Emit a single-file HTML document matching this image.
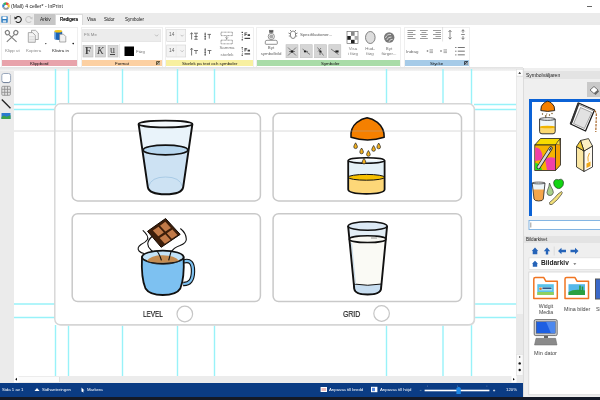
<!DOCTYPE html>
<html><head><meta charset="utf-8">
<style>
*{box-sizing:border-box;margin:0;padding:0}
html,body{width:600px;height:400px;overflow:hidden;background:#fff;font-family:"Liberation Sans",sans-serif;color:#222}
.a{position:absolute}
.t{position:absolute;white-space:nowrap;line-height:1;will-change:transform}
#title{left:0;top:0;width:600px;height:13px;background:#fff}
#tabs{left:0;top:13px;width:600px;height:12px;background:#ebebeb}
#ribbon{left:0;top:25px;width:600px;height:42.3px;background:#fff}
.grp{position:absolute;top:2px;height:40.5px;background:#fff;border:1px solid #efefef}
.band{position:absolute;left:0;right:0;bottom:1px;height:5.5px}
.gl{font-size:4.4px;color:#111;top:61.6px}
.rl{font-size:4.4px;color:#444}
#leftbar{left:0;top:68px;width:14px;height:315px;background:#ebebeb}
#canvas{left:14px;top:69px;width:503px;height:307px;background:#fff;overflow:hidden}
#vscroll{left:516px;top:68px;width:7px;height:315px;background:#e9e9e9}
#hscroll{left:14px;top:376px;width:502px;height:7px;background:#ececec}
#status{left:0;top:383px;width:523px;height:14px;background:#0b3c84}
#bottom{left:0;top:397px;width:600px;height:3px;background:#141a28}
#panel{left:523px;top:68px;width:77px;height:329px;background:#e9e9e9}
.st{font-size:4.3px;color:#fff;top:387.5px}
</style></head><body>
<!-- TITLE -->
<div id="title" class="a">
 <svg class="a" style="left:1.5px;top:2px" width="8" height="8" viewBox="0 0 8 8">
  <path d="M4 4L4 0.3A3.7 3.7 0 0 1 7.2 2.1Z" fill="#e94c3d"/>
  <path d="M4 4L7.2 2.1A3.7 3.7 0 0 1 7.2 5.9Z" fill="#f4c430"/>
  <path d="M4 4L0.8 2.1A3.7 3.7 0 0 1 4 0.3Z" fill="#3cae5c"/>
  <path d="M4 4L0.8 5.9A3.7 3.7 0 0 1 0.8 2.1Z" fill="#2f84d0"/>
  <path d="M0.8 5.9A3.7 3.7 0 0 0 7.2 5.9L4 4Z" fill="#9a9a9a"/>
  <circle cx="4" cy="4.3" r="1.6" fill="#fff"/>
 </svg>
 <div class="t" style="left:10.8px;top:4.3px;font-size:5.1px;color:#222">(Mall) 4 celler* - InPrint</div>
 <div class="a" style="left:586.5px;top:5.8px;width:5.5px;height:0.7px;background:#666"></div>
</div>
<!-- TABS -->
<div id="tabs" class="a">
 <svg class="a" style="left:1px;top:3px" width="7" height="7" viewBox="0 0 7 7">
  <rect x="0.3" y="0.3" width="6.4" height="6.4" rx="0.6" fill="#2d7cc0"/>
  <rect x="1.5" y="0.6" width="4" height="2.4" fill="#fff"/>
  <rect x="1.8" y="4.3" width="3.4" height="2.2" fill="#cfe3f3"/>
 </svg>
 <div class="a" style="left:10px;top:2px;width:0.8px;height:9px;background:#c8c8c8"></div>
 <svg class="a" style="left:14px;top:3px" width="8" height="7" viewBox="0 0 8 7">
  <path d="M1.6 2.2A3 3 0 1 1 1.8 5.2" fill="none" stroke="#222" stroke-width="1.1"/>
  <path d="M0.3 0.6L3.2 2.4L0.6 3.6Z" fill="#222"/>
 </svg>
 <svg class="a" style="left:25px;top:3px" width="8" height="7" viewBox="0 0 8 7">
  <path d="M6.4 2.2A3 3 0 1 0 6.2 5.2" fill="none" stroke="#c8c8c8" stroke-width="1.1"/>
  <path d="M7.7 0.6L4.8 2.4L7.4 3.6Z" fill="#c8c8c8"/>
 </svg>
 <div class="a" style="left:34px;top:0.5px;width:21px;height:11.5px;background:#c6c6c6"></div>
 <div class="t" style="left:39.6px;top:5.3px;font-size:4.85px;color:#222">Arkiv</div>
 <div class="a" style="left:55px;top:0.5px;width:27.5px;height:12px;background:#fff;border:1px solid #dadada;border-bottom:none"></div>
 <div class="t" style="left:59.6px;top:5.3px;font-size:4.45px;color:#000;-webkit-text-stroke:0.15px #000">Redigera</div>
 <div class="t" style="left:87px;top:5.3px;font-size:4.5px;color:#111">Visa</div>
 <div class="t" style="left:104.4px;top:5.3px;font-size:4.55px;color:#111">Sidor</div>
 <div class="t" style="left:125px;top:5.3px;font-size:4.5px;color:#111">Symboler</div>
</div>
<!-- RIBBON -->
<div id="ribbon" class="a">
 <div class="grp" style="left:1px;width:77px"><div class="band" style="background:#e8a3ab"></div></div>
 <div class="grp" style="left:80.5px;width:82px"><div class="band" style="background:#fcd0a2"></div></div>
 <div class="grp" style="left:164.5px;width:89.5px"><div class="band" style="background:#f8f0a0"></div></div>
 <div class="grp" style="left:256px;width:145px"><div class="band" style="background:#a9dca8"></div></div>
 <div class="grp" style="left:403.5px;width:66.5px"><div class="band" style="background:#a6cbe8"></div></div>
</div>
<div id="ribbonc" class="a" style="left:0;top:0;width:600px;height:68px">
 <svg class="a" style="left:0;top:25px" width="600" height="43" viewBox="0 25 600 43">
 <!-- scissors -->
 <g fill="none" stroke="#808080" stroke-width="1.15">
  <ellipse cx="7.4" cy="32.6" rx="2" ry="2.2" transform="rotate(-30 7.4 32.6)"/><ellipse cx="15.8" cy="32.6" rx="2" ry="2.2" transform="rotate(30 15.8 32.6)"/>
  <path d="M8.8 34.6L16.6 41.8M14.4 34.6L6.8 41.8"/>
 </g>
 <!-- copy -->
 <g fill="#f4f4f4" stroke="#8a8a8a" stroke-width="0.7">
  <path d="M31.5 30.3H35.5L38.3 33V39.5H31.5Z"/>
  <path d="M28.3 32.6H32.5L35.3 35.3V42.3H28.3Z"/>
 </g>
 <g stroke="#c0c0c0" stroke-width="0.4"><path d="M29.3 36.5H34.3M29.3 38H34.3M29.3 39.5H34.3M29.3 41H34.3"/></g>
 <!-- paste -->
 <path d="M54.5 31.5V39.2Q58.3 40.6 62.2 39.2V31.5Z" fill="#1d63b5"/>
 <path d="M55.5 32V39" stroke="#5aa0e8" stroke-width="1"/>
 <ellipse cx="58.3" cy="31.3" rx="3.9" ry="1.2" fill="#f0c419"/>
 <path d="M59.6 34.2H63.5L65.8 36.5V42H59.6Z" fill="#f2f2f2" stroke="#777" stroke-width="0.6"/>
 <circle cx="45.8" cy="43.6" r="0.7" fill="#333"/>
 <circle cx="73.2" cy="43.6" r="0.8" fill="#111"/>
 <!-- Format -->
 <rect x="82.5" y="29.7" width="78.3" height="12" fill="#ececec" stroke="#e0e0e0" stroke-width="0.6"/>
 <path d="M155 34.6L156.6 36.2L158.2 34.6" fill="none" stroke="#999" stroke-width="0.6"/>
 <g fill="#d6d6d6" stroke="#bdbdbd" stroke-width="0.6">
  <rect x="83" y="45.5" width="10" height="11.5"/>
  <rect x="95.5" y="45.5" width="10" height="11.5"/>
  <rect x="108" y="45.5" width="10" height="11.5"/>
 </g>
 <path d="M119.6 44V58" stroke="#d8d8d8" stroke-width="0.6"/>
 <rect x="124.5" y="46.5" width="9.5" height="9.5" fill="#000"/>
 <g fill="#555"><rect x="156" y="61" width="4" height="4" fill="#6b5a3a"/></g>
 <path d="M156.6 61.6L159.4 64.4M157 64.4H159.4V62" fill="none" stroke="#fff" stroke-width="0.5"/>
 <!-- Storlek -->
 <g fill="#f3f3f3" stroke="#d4d4d4" stroke-width="0.6">
  <rect x="166.7" y="29.5" width="19" height="12"/>
  <rect x="166.7" y="45" width="19" height="12"/>
 </g>
 <path d="M176.2 29.5V41.5M176.2 45V57" stroke="#e2e2e2" stroke-width="0.5"/>
 <path d="M180.6 34.8L182.1 36.3L183.6 34.8M180.6 50.3L182.1 51.8L183.6 50.3" fill="none" stroke="#999" stroke-width="0.55"/>
 <g stroke="#555" stroke-width="0.8" fill="none">
  <path d="M191.6 33V39.5M190.4 34.2L191.6 32.6L192.8 34.2"/>
  <path d="M194 33.2H198M196 33.2V39.3M194.3 39.3H197.7M194.3 36.5H197.7"/>
  <path d="M205.2 32.6V39.6"/>
  <path d="M207.5 34.4H211M209.3 34.4V38.6"/>
  <path d="M191.6 48.5V55.5M190.4 49.7L191.6 48.1L192.8 49.7"/>
  <path d="M194 50.5H198M196 50.5V54"/>
  <path d="M205.2 48.2V55.5"/>
  <path d="M207.6 50.5H211.4M209.5 50.5V54"/>
 </g>
 <g fill="#555"><rect x="204.5" y="33.6" width="1.4" height="1"/><rect x="204.5" y="36" width="1.4" height="1"/><rect x="204.5" y="38.5" width="1.4" height="1"/>
  <rect x="204.5" y="49.4" width="1.4" height="1"/><rect x="204.5" y="51.8" width="1.4" height="1"/><rect x="204.5" y="54.3" width="1.4" height="1"/></g>
 <g fill="none" stroke="#666" stroke-width="0.7" stroke-dasharray="0.9 0.5">
  <rect x="221" y="32.2" width="11.4" height="3.4"/>
  <rect x="221" y="40.2" width="11.4" height="3.6"/>
 </g>
 <g fill="none" stroke="#777" stroke-width="0.6">
  <path d="M226.7 35.8V40M225.3 37.3L226.7 38.8L228.1 37.3"/>
 </g>
 <g fill="#333">
  <rect x="241.6" y="31.8" width="1.3" height="1.2"/><rect x="241.9" y="34" width="0.8" height="0.8"/><rect x="241.9" y="35.7" width="0.8" height="0.8"/><rect x="241.9" y="37.4" width="0.8" height="0.8"/><rect x="241.6" y="39.2" width="1.3" height="1.2"/>
  <rect x="241.6" y="47.2" width="1.3" height="1.2"/><rect x="241.9" y="49.4" width="0.8" height="0.8"/><rect x="241.9" y="51.1" width="0.8" height="0.8"/><rect x="241.9" y="52.8" width="0.8" height="0.8"/><rect x="241.6" y="54.6" width="1.3" height="1.2"/>
 </g>
 <g fill="#444">
  <path d="M244.5 36V32.4H247.2V33.3H245.4V33.9H246.9V34.8H245.4V36Z"/><path d="M247.6 34.2H250V36H247.6Z"/>
  <rect x="244.5" y="37.8" width="5.6" height="1.2"/>
  <path d="M244.5 51.5V47.9H247.2V48.8H245.4V49.4H246.9V50.3H245.4V51.5Z"/><path d="M247.6 49.7H250V51.5H247.6Z"/>
  <rect x="244.5" y="53.3" width="5.6" height="1.2"/>
 </g>
 <!-- Symboler -->
 <g fill="none" stroke="#666" stroke-width="0.7">
  <rect x="269.5" y="30.3" width="3.5" height="2" fill="#555"/>
  <circle cx="271.3" cy="36.5" r="3.1"/>
  <path d="M271.3 32.3V33.4M265.3 41.8Q265.3 40.3 267 40.3H275.7Q277.3 40.3 277.3 41.8V43.6Q277.3 44.3 276.6 44.3H266Q265.3 44.3 265.3 43.6Z"/>
 </g>
 <circle cx="271.3" cy="36.5" r="2" fill="#aaa"/>
 <g fill="none" stroke="#555" stroke-width="0.7">
  <path d="M290.5 33.5Q290.5 31 293 31Q295.5 31 295.5 33.5V35.5Q295.5 38.5 293 38.5Q290.5 38.5 290.5 35.5Z"/>
  <path d="M288.5 33L290.5 34M297.5 33L295.5 34M291 31L290 30M295 31L296 30M288.8 36H290.5M297.2 36H295.5"/>
 </g>
 <g fill="#d5d5d5" stroke="#c0c0c0" stroke-width="0.6">
  <rect x="286" y="44.7" width="12" height="13"/>
  <rect x="300.2" y="44.7" width="12" height="13"/>
  <rect x="314.5" y="44.7" width="12" height="13"/>
  <rect x="328.8" y="44.7" width="12" height="13"/>
 </g>
 <g fill="none" stroke="#555" stroke-width="0.7">
  <path d="M288 47.5L296 55.5M296 47.5L288 55.5M289 51.5H295"/>
  <path d="M302.5 49L310 54.5M304.5 51L308 51.5"/>
  <path d="M317.5 47.5L323.5 55.5M318 51.5L321 48M320 55V50.5"/>
  <path d="M331 49L338.5 54.5M334 51.5L338.5 51"/>
 </g>
 <g fill="#222">
  <circle cx="292" cy="51.5" r="1.2"/><circle cx="305" cy="51.5" r="1.1"/><circle cx="320.5" cy="51.5" r="1.1"/><rect x="335.5" y="50.5" width="3" height="2"/>
 </g>
 <g stroke="#555" stroke-width="0.6"><rect x="347" y="31.6" width="11" height="11.8" fill="#fff"/></g>
 <g fill="#222"><rect x="347.3" y="36" width="3.5" height="3.8"/><rect x="351" y="39.8" width="3.6" height="3.5"/><rect x="351" y="32" width="3.6" height="3.8" fill="#888"/><rect x="354.6" y="36" width="3.4" height="3.8" fill="#aaa"/></g>
 <ellipse cx="370.3" cy="37.5" rx="4.8" ry="6" fill="#ddd" stroke="#666" stroke-width="0.8"/>
 <circle cx="389.2" cy="37.5" r="5.2" fill="#777"/>
 <g fill="none" stroke="#fff" stroke-width="0.7"><path d="M385.5 38Q387 33.8 391 34.5M386.8 40Q388.3 36.5 391.5 37M389 41.8Q390 39 392.7 39.3"/></g>
 <!-- Stycke -->
 <g stroke="#7a7a7a" stroke-width="0.75">
  <path d="M407.5 30.5H415.5M407.5 32.5H413M407.5 34.5H415.5M407.5 36.5H413M407.5 38.5H415.5"/>
  <path d="M420 30.5H427.8M421.5 32.5H426.3M420 34.5H427.8M421.5 36.5H426.3M420 38.5H427.8"/>
  <path d="M433 30.5H441M435.5 32.5H441M433 34.5H441M435.5 36.5H441M433 38.5H441"/>
 </g>
 <path d="M442.6 27V41.5" stroke="#cfcfcf" stroke-width="0.6"/>
 <g fill="none" stroke="#555" stroke-width="0.7">
  <path d="M450 30.5V39M448.5 32L450 30.3L451.5 32M448.5 37.5L450 39.2L451.5 37.5"/>
  <path d="M463 29.8V33M461.5 31.3L463 29.7L464.5 31.3M463 36V39.3M461.5 37.8L463 39.4L464.5 37.8M461.2 34.5H464.8"/>
 </g>
 <g stroke="#777" stroke-width="0.6">
  <path d="M426.5 51H428.5M427.5 50V52M429.5 49.8H433M429.5 51.2H433M429.5 52.6H433"/>
  <path d="M440 51H442M441 50V52M443.5 49.8H447M443.5 51.2H447M443.5 52.6H447"/>
 </g>
 <g fill="#666"><rect x="455.2" y="47" width="1.2" height="1"/><rect x="455.2" y="50.7" width="1.2" height="1"/><rect x="455.2" y="54.4" width="1.2" height="1"/>
  <rect x="457.8" y="47" width="7" height="0.9"/><rect x="457.8" y="50.7" width="7" height="0.9"/><rect x="457.8" y="54.4" width="7" height="0.9"/></g>
 <rect x="464" y="61" width="4" height="4" fill="#3a4a5a"/>
 <path d="M464.6 61.6L467.4 64.4M465 64.4H467.4V62" fill="none" stroke="#fff" stroke-width="0.5"/>
</svg>
<div class="t" style="left:4.80px;top:48.58px;font-size:4.4px;color:#888;">Klipp ut</div>
<div class="t" style="left:26.00px;top:48.58px;font-size:4.4px;color:#888;">Kopiera</div>
<div class="t" style="left:51.60px;top:48.98px;font-size:4.4px;color:#222;">Klistra in</div>
<div class="t" style="left:84.30px;top:33.28px;font-size:4.4px;color:#888;">FS Me</div>
<div class="t" style="left:84.6px;top:45.6px;font-size:10px;font-family:'Liberation Serif';font-weight:bold;color:#444">F</div>
<div class="t" style="left:96.8px;top:45.6px;font-size:10px;font-family:'Liberation Serif';font-style:italic;color:#444">K</div>
<div class="t" style="left:110px;top:45.3px;font-size:10px;font-family:'Liberation Serif';color:#444;text-decoration:underline">u</div>
<div class="t" style="left:136.20px;top:49.58px;font-size:4.4px;color:#777;">Färg</div>
<div class="t" style="left:168.60px;top:33.16px;font-size:4.8px;color:#666;">14</div>
<div class="t" style="left:168.60px;top:48.66px;font-size:4.8px;color:#666;">14</div>
<div class="t" style="left:211.60px;width:30px;text-align:center;top:46.38px;font-size:4.4px;color:#777;">Samma</div>
<div class="t" style="left:211.60px;width:30px;text-align:center;top:52.78px;font-size:4.4px;color:#777;">storlek</div>
<div class="t" style="left:256.30px;width:30px;text-align:center;top:46.18px;font-size:4.4px;color:#666;">Byt</div>
<div class="t" style="left:256.30px;width:30px;text-align:center;top:52.18px;font-size:4.4px;color:#666;">symbolbild</div>
<div class="t" style="left:299.80px;top:32.78px;font-size:4.4px;color:#555;">Specifikationer...</div>
<div class="t" style="left:337.60px;width:30px;text-align:center;top:46.78px;font-size:4.4px;color:#777;">Visa</div>
<div class="t" style="left:337.60px;width:30px;text-align:center;top:52.38px;font-size:4.4px;color:#777;">i färg</div>
<div class="t" style="left:355.30px;width:30px;text-align:center;top:46.78px;font-size:4.4px;color:#777;">Hud-</div>
<div class="t" style="left:355.30px;width:30px;text-align:center;top:52.38px;font-size:4.4px;color:#777;">färg</div>
<div class="t" style="left:374.30px;width:30px;text-align:center;top:46.78px;font-size:4.4px;color:#777;">Byt</div>
<div class="t" style="left:374.30px;width:30px;text-align:center;top:52.38px;font-size:4.4px;color:#777;">färger...</div>
<div class="t" style="left:406.30px;top:49.58px;font-size:4.4px;color:#666;">Indrag</div>
<div class="t gl" style="left:30px">Klippbord</div>
 <div class="t gl" style="left:114.5px">Format</div>
 <div class="t gl" style="left:181.6px">Storlek på text och symboler</div>
 <div class="t gl" style="left:321px">Symboler</div>
 <div class="t gl" style="left:430px">Stycke</div>
</div>
<!-- LEFT TOOLBAR -->
<div id="leftbar" class="a">
 <svg class="a" style="left:0;top:0" width="14" height="60" viewBox="0 0 14 60">
  <rect x="1.8" y="5.5" width="8.8" height="9" rx="2" fill="#fff" stroke="#9aa8bc" stroke-width="1"/><path d="M2.5 13.8Q3 14.6 4 14.6H8.5Q9.6 14.6 10 13.6" fill="none" stroke="#6a7890" stroke-width="0.8"/>
  <rect x="1.8" y="18.3" width="8.6" height="9" rx="1" fill="#e2e2e2" stroke="#8a8a8a" stroke-width="0.8"/>
  <g stroke="#8a8a8a" stroke-width="0.8"><path d="M4.7 18.3V27.3M7.5 18.3V27.3M1.8 21.3H10.4M1.8 24.3H10.4"/></g>
  <path d="M1.8 31.5L10.5 40.3" stroke="#222" stroke-width="1.3"/>
  <rect x="1.5" y="45" width="9" height="6" fill="#2a7bd0"/>
  <path d="M1.5 49L4 47.5L6.5 48.8L10.5 47.2V51H1.5Z" fill="#3ba24a"/>
 </svg>
</div>
<div id="canvas" class="a"></div>
<div class="a" style="left:0;top:67.3px;width:523px;height:3.4px;background:linear-gradient(#e2e2e2,#f4f4f4)"></div>
<svg class="a" style="left:0;top:0" width="600" height="400" viewBox="0 0 600 400">
 <g stroke="#98f2f9" stroke-width="1.4" fill="none">
  <path d="M55.5 69V104M68.5 69V104M122.5 69V104M177.5 69V104M214.5 69V104M386.5 69V104M443 69V104M471.5 69V104"/>
  <path d="M55.5 325V376M68.5 325V376M122.5 325V376M177.5 325V376M214.5 325V376M386.5 325V376M443 325V376M471.5 325V376"/>
  <path d="M14 104.5H56M14 109.5H55M14 304H55M14 317.5H55M474 104.5H516M474 109.5H516M474 304H516M474 317.5H516"/>
 </g>
 <rect x="55.2" y="104.2" width="420" height="221.5" rx="5.5" fill="#e4e4e4"/>
 <rect x="54.8" y="103.8" width="419.5" height="221" rx="5.5" fill="#fff" stroke="#d6d6d6" stroke-width="1.4"/>
 <g fill="#fff" stroke="#c9c9c9" stroke-width="1.5">
  <rect x="72.2" y="113.3" width="188.2" height="87.6" rx="5.5"/>
  <rect x="273.1" y="113.3" width="188.4" height="87.6" rx="5.5"/>
  <rect x="72.2" y="213.7" width="188.2" height="87.9" rx="5.5"/>
  <rect x="273.1" y="213.7" width="188.4" height="87.9" rx="5.5"/>
 </g>
 <g fill="none" stroke="#c6c6c6" stroke-width="1.2">
  <circle cx="184.8" cy="314" r="7.8"/>
  <circle cx="381.6" cy="313.5" r="7.8"/>
 </g>
</svg>

<svg class="a" style="left:0;top:0" width="600" height="400" viewBox="0 0 600 400">
 <path d="M14 131H516" stroke="#dadada" stroke-width="1"/>
 <!-- water glass -->
 <path d="M138.6 124L147.8 187Q149 194.3 165.5 194.3Q182 194.3 183.2 187L192.4 124Z" fill="#e9f3fa"/>
 <path d="M142.5 150L147.8 187Q149 194.3 165.5 194.3Q182 194.3 183.2 187L188.5 150.5Z" fill="#cde2f3"/>
 <path d="M148.6 186.5Q151 177 165.5 177Q180 177 182.4 186.5" fill="none" stroke="#a9cbe6" stroke-width="1"/>
 <ellipse cx="165.5" cy="150" rx="22.3" ry="4.9" fill="#b8d7ef" stroke="#111" stroke-width="1.7"/>
 <path d="M138.6 124L147.8 187Q149 194.3 165.5 194.3Q182 194.3 183.2 187L192.4 124" fill="none" stroke="#111" stroke-width="1.9" stroke-linejoin="round"/>
 <ellipse cx="165.5" cy="124" rx="26.9" ry="3.4" fill="#f4f9fd" stroke="#111" stroke-width="1.8"/>

 <!-- orange juice -->
 <path d="M351 137.2Q350.2 128 357 122.3Q362 118.6 367.1 117.8Q372.2 118.6 377.4 122.3Q384.4 128 384.2 137.2Q367.6 142.6 351 137.2Z" fill="#f58000" stroke="#111" stroke-width="1.5" stroke-linejoin="round"/>
 <g fill="#f2b01e" stroke="#222" stroke-width="0.7">
  <path d="M355.6 142.8Q357.4 145.6 357.4 146.8A1.8 1.8 0 0 1 353.8 146.8Q353.8 145.6 355.6 142.8Z"/>
  <path d="M361.6 148Q363.4 150.8 363.4 152A1.8 1.8 0 0 1 359.8 152Q359.8 150.8 361.6 148Z"/>
  <path d="M368.4 150.5Q370.2 153.3 370.2 154.5A1.8 1.8 0 0 1 366.6 154.5Q366.6 153.3 368.4 150.5Z"/>
  <path d="M373.6 145.5Q375.4 148.3 375.4 149.5A1.8 1.8 0 0 1 371.8 149.5Q371.8 148.3 373.6 145.5Z"/>
  <path d="M378.7 143Q380.5 145.8 380.5 147A1.8 1.8 0 0 1 376.9 147Q376.9 145.8 378.7 143Z"/>
 </g>
 <path d="M348.2 160.5V189.5Q348.6 193.8 366.4 193.8Q384.2 193.8 384.6 189.5V160.5Z" fill="#e4f1f7"/>
 <path d="M348.2 177.3V189.5Q348.6 193.8 366.4 193.8Q384.2 193.8 384.6 189.5V177.3Z" fill="#fdd778"/>
 <ellipse cx="366.4" cy="177.3" rx="18.2" ry="2.9" fill="#f6c000" stroke="#111" stroke-width="1"/>
 <path d="M348.2 160.5V189.5Q348.6 193.8 366.4 193.8Q384.2 193.8 384.6 189.5V160.5" fill="none" stroke="#111" stroke-width="1.8"/>
 <ellipse cx="366.4" cy="160.5" rx="18.2" ry="2.7" fill="none" stroke="#111" stroke-width="1.5"/>
 <path d="M364 158.2Q365.8 161 365.8 162.2A1.8 1.8 0 0 1 362.2 162.2Q362.2 161 364 158.2Z" fill="#f2b01e" stroke="#222" stroke-width="0.7"/>

 <!-- hot chocolate -->
 <g fill="none" stroke="#111" stroke-width="1.1" stroke-linecap="round">
  <path d="M143.1 230.6Q149 236 147.5 239.5Q146 242 141 244.5Q136.5 247.5 139 251Q141 253 144 253.5"/>
  <path d="M152.5 236Q148 240 147.8 243.5Q147.5 247 151 250Q156 254 161.3 260"/>
  <path d="M180.6 228.8Q186 233 186.3 239Q186.5 243 180 245.5Q173 248 171.5 252Q170 256 168.8 260"/>
 </g>
 <path d="M165.6 218.5L180.2 234.4L161.2 247.3L147.5 231.3Z" fill="#3d1e0a" stroke="#140a03" stroke-width="1" stroke-linejoin="round"/>
 <g fill="#c27a48">
  <path d="M165.3 221.8L170.9 227.9L165.4 231.6L160 225.7Z"/>
  <path d="M172.4 229.6L177.4 235L171.8 238.8L166.8 233.3Z"/>
  <path d="M158.5 226.7L163.8 232.6L158.3 236.3L152.9 230.5Z"/>
  <path d="M165.4 234.3L170.5 239.9L164.8 243.7L159.7 238Z"/>
 </g>
 <path d="M183.6 261.5Q193.2 258.6 193 271.5Q192.8 284.5 183.2 284" fill="none" stroke="#111" stroke-width="4.4"/>
 <path d="M183.6 261.5Q193.2 258.6 193 271.5Q192.8 284.5 183.2 284" fill="none" stroke="#7cc0f0" stroke-width="2.2"/>
 <path d="M142 257Q141 278 145.5 288.5Q149.5 295 162.8 295Q176.5 295 180.3 288.5Q184.6 278 183.6 257Z" fill="#7dc1f1" stroke="#111" stroke-width="1.8" stroke-linejoin="round"/>
 <ellipse cx="162.8" cy="257" rx="20.8" ry="6.3" fill="#c3e3f8" stroke="#111" stroke-width="1.7"/>
 <path d="M146.5 261Q151 255.2 162.8 255.3Q175 255.4 179.2 261Q172 262.8 162.8 262.8Q152 262.8 146.5 261Z" fill="#c48c52"/>
 <path d="M144 259.5Q150 264.3 162.8 264.3Q175.5 264.3 181.6 259.5" fill="none" stroke="#222" stroke-width="0.8"/>
 <g fill="none" stroke="#111" stroke-width="1.1" stroke-linecap="round">
  <path d="M156.9 251Q159.5 254 161.3 260"/>
  <path d="M171.3 251Q170 255 168.8 260"/>
 </g>
 <!-- milk glass -->
 <path d="M348.1 226L354.3 289Q355 294.5 367.6 294.5Q380.3 294.5 381 289L387.1 226Z" fill="#fafaf5"/>
 <path d="M348.1 226L349.4 239H385.8L387.1 226Z" fill="#e3eef6"/>
 <path d="M353.5 284L354.3 289Q355 294.5 367.6 294.5Q380.3 294.5 381 289L381.6 284Q368 286.5 353.5 284Z" fill="#c8def1" stroke="#111" stroke-width="1"/>
 <path d="M351.5 243L355.5 284" stroke="#c8dbe9" stroke-width="1.1"/>
 <ellipse cx="367.6" cy="239.2" rx="18.3" ry="3.4" fill="#f8f8f3" stroke="#111" stroke-width="1.5"/>
 <path d="M371 238H377" stroke="#888" stroke-width="0.9"/>
 <path d="M348.1 226L354.3 289Q355 294.5 367.6 294.5Q380.3 294.5 381 289L387.1 226" fill="none" stroke="#111" stroke-width="1.9" stroke-linejoin="round"/>
 <ellipse cx="367.6" cy="226" rx="19.5" ry="4.3" fill="#dce9f5" stroke="#111" stroke-width="1.6"/>
</svg>
<svg class="a" style="left:0;top:0" width="600" height="400"><path d="M351 131H384.5" stroke="#aaa" stroke-opacity="0.45" stroke-width="1"/></svg>
<div class="t" style="left:142.6px;top:309.5px;font-size:8.6px;color:#1a1a1a;-webkit-text-stroke:0.2px #1a1a1a;transform:scaleX(0.74);transform-origin:0 0">LEVEL</div>
<div class="t" style="left:343px;top:309.5px;font-size:8.6px;color:#1a1a1a;-webkit-text-stroke:0.2px #1a1a1a;transform:scaleX(0.8);transform-origin:0 0">GRID</div>
<div id="vscroll" class="a"></div>
<div class="a" style="left:517px;top:77px;width:5.5px;height:237px;background:#f4f4f4"></div>
<svg class="a" style="left:516px;top:69px" width="8" height="8"><rect x="0.5" y="0.5" width="6.5" height="6.5" fill="#fff" stroke="#ddd" stroke-width="0.5"/><path d="M2.3 4.8L3.7 3L5.1 4.8Z" fill="#111"/></svg>
<svg class="a" style="left:516px;top:354px" width="8" height="22">
 <rect x="0.5" y="0.5" width="6.5" height="21" fill="#fafafa" stroke="#ddd" stroke-width="0.5"/>
 <circle cx="3.7" cy="3" r="0.7" fill="#222"/><circle cx="3.7" cy="9.4" r="1.2" fill="#111"/><circle cx="3.7" cy="16" r="1.2" fill="#111"/>
</svg>
<div id="hscroll" class="a"></div>
<div class="a" style="left:18px;top:376.6px;width:42px;height:5.8px;background:#fbfbfb;border-right:1px solid #dedede"></div>
<svg class="a" style="left:14px;top:376px" width="5" height="7"><rect x="0" y="0" width="4.5" height="6.5" fill="#fff"/><path d="M3 1.8L1.2 3.3L3 4.8Z" fill="#111"/></svg>
<svg class="a" style="left:511px;top:376px" width="6" height="7"><rect x="0.5" y="0" width="5" height="6.5" fill="#fff"/><path d="M2 2L3.8 3.3L2 4.6Z" fill="#111"/></svg>
<!-- STATUS -->
<div id="status" class="a"></div>
<div class="t st" style="left:1.5px">Sida 1 av 1</div>
<svg class="a" style="left:34px;top:387px" width="6" height="5"><path d="M0.5 4L3 1L5.5 4Z" fill="#fff"/></svg>
<div class="t st" style="left:42px">Sidhanteringen</div>
<svg class="a" style="left:81px;top:386.5px" width="4" height="6"><path d="M0.5 0.5L3.5 3.5L2 3.6L2.8 5.5L0.5 4.5Z" fill="#fff"/></svg>
<div class="t st" style="left:87px">Markera</div>

<svg class="a" style="left:0;top:0" width="600" height="400" viewBox="0 0 600 400">
 <rect x="320.6" y="387" width="6.4" height="5" fill="#fff"/>
 <rect x="321.5" y="388" width="4.6" height="3" fill="#c23a3a" opacity="0.35"/>
 <rect x="371" y="386.8" width="6.4" height="5.4" fill="#fff"/>
 <rect x="372" y="387.8" width="3" height="3.4" fill="#5a8ae0"/>
 <path d="M419.8 390.4H421.5" stroke="#9bb" stroke-width="0.5"/>
 <rect x="424.6" y="389.7" width="64.8" height="1.6" fill="#fff"/>
 <g fill="#aac"><rect x="427.2" y="385.7" width="0.6" height="0.8"/><rect x="457.3" y="385.7" width="0.6" height="0.8"/><rect x="486.6" y="385.7" width="0.6" height="0.8"/></g>
 <path d="M456.4 388L458.6 386.8L460.8 388V394H456.4Z" fill="#1e88e5"/>
 <path d="M493 390.5H495.2M494.1 389.4V391.6" stroke="#fff" stroke-width="0.6"/>
</svg>
<div class="t st" style="left:329px">Anpassa till bredd</div>
<div class="t st" style="left:380px">Anpassa till höjd</div>
<div class="t st" style="left:506px">120%</div>
<div id="bottom" class="a"></div>

<div class="a" style="left:523px;top:68px;width:77px;height:329px;background:#efefef;border-left:1px solid #dcdcdc"></div>
<div class="a" style="left:524px;top:70.7px;width:76px;height:8.6px;background:#e3e3e3"></div>
<div class="t" style="left:525.5px;top:72.9px;font-size:5px;color:#222">Symbolväljaren</div>
<div class="a" style="left:587.2px;top:81.8px;width:13px;height:15.4px;background:#c9c9c9"></div>
<svg class="a" style="left:587px;top:82px" width="13" height="15" viewBox="0 0 13 15">
 <path d="M3 8L7 4.5L11 8L7 11.5Z" fill="#fff" stroke="#555" stroke-width="0.8"/>
 <path d="M7 11.5L11 8L12 9.5L8.5 13Z" fill="#666"/>
</svg>
<div class="a" style="left:528.6px;top:99.2px;width:72px;height:117px;background:#fff;border:3.2px solid #0b62d6;border-right:none;border-bottom:none"></div>
<svg class="a" style="left:0;top:0" width="600" height="400" viewBox="0 0 600 400">
 <!-- sym1 juice -->
 <path d="M540.8 110.6Q540.5 105.5 543.8 103.2Q546 101.6 547.7 101.2Q549.5 101.6 551.6 103.2Q555 105.5 554.7 110.6Q547.7 112.2 540.8 110.6Z" fill="#f58000" stroke="#1a1a1a" stroke-width="0.9"/>
 <g fill="#6a4a10"><circle cx="542.5" cy="114" r="0.7"/><circle cx="545.5" cy="116" r="0.7"/><circle cx="549.5" cy="115" r="0.7"/><circle cx="552" cy="113.5" r="0.7"/></g>
 <path d="M547 113L545.5 118" stroke="#6a5020" stroke-width="0.5"/>
 <path d="M539.6 119V131.5Q539.6 133.8 542 133.8H553Q555.2 133.8 555.2 131.5V119Z" fill="#eef5f8"/>
 <path d="M539.6 127V131.5Q539.6 133.8 542 133.8H553Q555.2 133.8 555.2 131.5V127Z" fill="#fbd870"/>
 <ellipse cx="547.4" cy="127" rx="7.8" ry="1.3" fill="#f0b400"/>
 <path d="M539.6 119V131.5Q539.6 133.8 542 133.8H553Q555.2 133.8 555.2 131.5V119" fill="none" stroke="#222" stroke-width="0.9"/>
 <ellipse cx="547.4" cy="119" rx="7.8" ry="1.3" fill="none" stroke="#222" stroke-width="0.8"/>
 <!-- sym2 carton tilted -->
 <path d="M578.6 103L594.5 110L585.5 131L570.6 124Z" fill="#fff" stroke="#1a1a1a" stroke-width="1.3" stroke-linejoin="round"/>
 <path d="M578.6 103L571.8 121.5L570.6 124" fill="none" stroke="#333" stroke-width="2.2"/>
 <path d="M580.5 107.5L591.8 112.5L584.4 128.5L573.6 123.6Z" fill="#e2e2e2" stroke="#555" stroke-width="0.5"/>
 <path d="M578.8 104.5L593 110.7" stroke="#666" stroke-width="0.7"/>
 <path d="M594.5 110.5Q596.5 112 596.3 116L595.8 132" fill="none" stroke="#a05a18" stroke-width="1.1" stroke-dasharray="2.5 1"/>
 <!-- sym3 juice box -->
 <path d="M534.8 145L540.5 138.5H560.5L555.5 145Z" fill="#f7dc00" stroke="#222" stroke-width="0.8" stroke-linejoin="round"/>
 <path d="M555.5 145L560.5 138.5V165L555.5 170.5Z" fill="#f5a000" stroke="#222" stroke-width="0.8" stroke-linejoin="round"/>
 <path d="M556 144L559.5 139.5L559.8 145Z" fill="#f8e040" stroke="#333" stroke-width="0.4"/>
 <rect x="534.8" y="145" width="20.7" height="25.5" fill="#f6b400" stroke="#222" stroke-width="0.8"/>
 <path d="M535.2 147.5Q539 147 541 151Q544 156 541 160L535.2 161Z" fill="#f040a8"/>
 <path d="M545 159Q550 156 555.1 158V170.1H547Z" fill="#f040a8"/>
 <path d="M535.2 163Q539 163 541 167L542 170.1H535.2Z" fill="#22dd22"/>
 <path d="M538.6 167.2L550.8 148.2" stroke="#222" stroke-width="3.8" stroke-linecap="round"/>
 <path d="M538.6 167.2L550.8 148.2" stroke="#d8dcdc" stroke-width="2.4" stroke-linecap="round"/>
 <path d="M549.6 150L551 148" stroke="#222" stroke-width="1.2" stroke-linecap="round"/>
 <!-- sym4 milk carton -->
 <g stroke="#1a1a1a" stroke-width="0.8" stroke-linejoin="round">
  <path d="M576.5 146.5L584 151V171.5L576.5 167Z" fill="#fbe7a4"/>
  <path d="M584 151L592.5 146V167L584 171.5Z" fill="#fffaf0"/>
  <path d="M580.5 140.5L588.5 138.6L592.5 146L584 151Z" fill="#fdf0c4"/>
  <path d="M576.5 146.5L580.5 140.5L584 151Z" fill="#f2cc3a"/>
 </g>
 <path d="M589.5 153Q587 157 588.2 161.5" fill="none" stroke="#e8a020" stroke-width="0.9"/>
 <path d="M586.5 163.5L590.5 161.5V166L586.5 168Z" fill="#f0a818"/>
 <!-- sym5 -->
 <path d="M532.2 183L534 199Q534.5 201 538.7 201Q543 201 543.3 199L545 183Z" fill="#eef5f8"/>
 <path d="M533.1 189.5L534 199Q534.5 201 538.7 201Q543 201 543.3 199L544.2 189.5Z" fill="#f6a64a"/>
 <path d="M532.2 183L534 199Q534.5 201 538.7 201Q543 201 543.3 199L545 183" fill="none" stroke="#222" stroke-width="0.8"/>
 <ellipse cx="538.6" cy="183" rx="6.4" ry="0.9" fill="none" stroke="#222" stroke-width="0.7"/>
 <path d="M549.5 183Q551 187 552.8 190Q554.3 193 552 195Q550 196 548 195Q546 193 547.6 190Q549 187 549.5 183Z" fill="#a8d08c" stroke="#333" stroke-width="0.6"/>
 <path d="M558.5 179.8Q562.5 178 563.5 182Q564 186 560.5 188.2Q558.5 189 556.5 188Q553.5 186 553.6 182.5Q554.5 178.3 558.5 179.8Z" fill="#12d412" stroke="#222" stroke-width="0.6"/>
 <path d="M549.5 202.5Q554 199 558 194L561.5 191.5Q562.8 192 561.8 194Q558 200 552 204.5Q549 205.5 549.5 202.5Z" fill="#f2e07a" stroke="#222" stroke-width="0.6"/>
 <!-- search -->
 <rect x="529" y="220.5" width="72" height="9" fill="#fff" stroke="#78aee0" stroke-width="0.9"/>
 <path d="M530.8 222.5V227.5" stroke="#333" stroke-width="0.5"/>
</svg>
<div class="a" style="left:524px;top:236px;width:76px;height:7px;background:#e3e3e3"></div>
<div class="t" style="left:525.6px;top:237.6px;font-size:4.6px;color:#222">Bildarkivet</div>
<svg class="a" style="left:0;top:0" width="600" height="400" viewBox="0 0 600 400">
 <rect x="529" y="257.8" width="72" height="11.6" fill="#fff" stroke="#dedede" stroke-width="0.7"/>
 <g fill="#2563b8">
  <path d="M531.8 251L535 247.6L538.2 251H537.3V254.2H532.7V251Z"/>
  <path d="M543.8 251.2L547 247.6L550.2 251.2H548.2V254.4H545.8V251.2Z"/>
  <path d="M558 251L561.5 247.8V249.8H566V252.2H561.5V254.2Z"/>
  <path d="M578.5 251L575 247.8V249.8H570.5V252.2H575V254.2Z"/>
  <path d="M532 263.8L535 260.8L538 263.8H537.2V266.8H532.8V263.8Z"/>
 </g>
 <path d="M554.2 246.5V255.5" stroke="#cfcfcf" stroke-width="0.6"/>
 <path d="M573.3 263.2H576.3L574.8 264.9Z" fill="#666"/>
 <rect x="528.8" y="272" width="72" height="122.8" fill="#fff" stroke="#d4d4d4" stroke-width="0.8"/>
 <!-- folders -->
 <g fill="#fff" stroke="#f07522" stroke-width="1.5" stroke-linejoin="round">
  <path d="M533.8 279V298.6H557.3V281.2H545.8L543.8 277.6H535.4Q533.8 277.6 533.8 279Z"/>
  <path d="M565 279V298.6H588.5V281.2H577L575 277.6H566.6Q565 277.6 565 279Z"/>
 </g>
 <rect x="537.3" y="284.2" width="16.5" height="10.8" fill="#5bc3ea"/>
 <rect x="537.3" y="292" width="16.5" height="3" fill="#8fd060"/>
 <rect x="539" y="287" width="13" height="3.5" fill="#fff" opacity="0.5"/>
 <circle cx="540.5" cy="288.8" r="1.3" fill="#f07522"/>
 <path d="M542.5 288.2H551.5" stroke="#1a3a70" stroke-width="1.3"/>
 <rect x="568.5" y="284.2" width="16.5" height="10.8" fill="#56b8ea"/>
 <path d="M568.5 292Q574 288.5 585 290.5V295H568.5Z" fill="#2aa040"/>
 <path d="M580 285.5V291M582.5 286.5V291" stroke="#2a9a3a" stroke-width="1.6"/>
 <rect x="595.5" y="279" width="8" height="20" fill="#3a68c8" stroke="#555" stroke-width="1"/>
 <!-- monitor -->
 <rect x="534.2" y="319.6" width="23" height="16" rx="1.5" fill="#cfcfcf" stroke="#555" stroke-width="0.8"/>
 <rect x="536.2" y="321.8" width="19" height="11.4" fill="#1d5fe2" stroke="#444" stroke-width="0.4"/>
 <path d="M546 321.8L551 333.2H555.2V321.8Z" fill="#4d88ee"/>
 <rect x="544" y="336" width="4" height="2" fill="#666"/>
 <path d="M536 338.3H555.6L557 345H534.5Z" fill="#8a8a8a" stroke="#666" stroke-width="0.5"/>
</svg>
<div class="t" style="left:541.2px;top:260.2px;font-size:6.6px;color:#222;font-weight:bold">Bildarkiv</div>
<div class="t" style="left:530.5px;width:30px;text-align:center;top:303.8px;font-size:5.2px;color:#444">Widgit</div>
<div class="t" style="left:530.5px;width:30px;text-align:center;top:310.2px;font-size:5.2px;color:#444">Media</div>
<div class="t" style="left:563.6px;top:307.2px;font-size:5.4px;color:#444">Mina bilder</div>
<div class="t" style="left:595.5px;top:307.2px;font-size:5.4px;color:#444">Sk</div>
<div class="t" style="left:534px;top:351px;font-size:5.5px;color:#444">Min dator</div>

</body></html>
